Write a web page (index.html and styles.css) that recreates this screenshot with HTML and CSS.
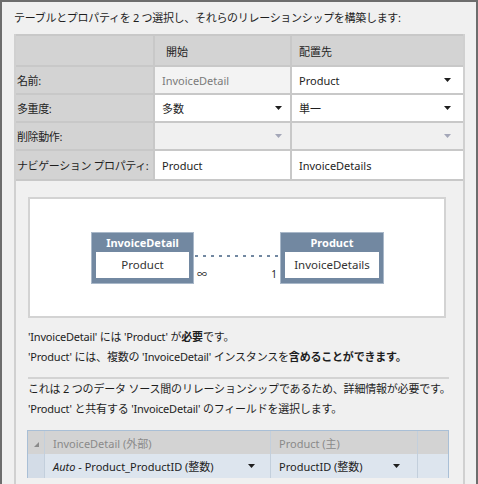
FILE: index.html
```html
<!DOCTYPE html>
<html lang="ja">
<head>
<meta charset="utf-8">
<link rel="stylesheet" href="styles.css">
</head>
<body>
<div class="window">
  <p class="intro">テーブルとプロパティを 2 つ選択し、それらのリレーションシップを構築します:</p>
  <div class="panel">
    <div class="props">
      <div class="cell head"></div>
      <div class="cell head">開始</div>
      <div class="cell head c3">配置先</div>

      <div class="cell label">名前:</div>
      <div class="cell value disabled">InvoiceDetail</div>
      <div class="cell value c3"><span>Product</span><svg class="arrow" width="7" height="4" viewBox="0 0 7 4"><path d="M0 0H7L3.5 4Z"/></svg></div>

      <div class="cell label">多重度:</div>
      <div class="cell value c2"><span>多数</span><svg class="arrow" width="7" height="4" viewBox="0 0 7 4"><path d="M0 0H7L3.5 4Z"/></svg></div>
      <div class="cell value c3"><span>単一</span><svg class="arrow" width="7" height="4" viewBox="0 0 7 4"><path d="M0 0H7L3.5 4Z"/></svg></div>

      <div class="cell label">削除動作:</div>
      <div class="cell value off c2"><span></span><svg class="arrow light" width="7" height="4" viewBox="0 0 7 4"><path d="M0 0H7L3.5 4Z"/></svg></div>
      <div class="cell value off c3"><span></span><svg class="arrow light" width="7" height="4" viewBox="0 0 7 4"><path d="M0 0H7L3.5 4Z"/></svg></div>

      <div class="cell label nav">ナビゲーション プロパティ:</div>
      <div class="cell value nav">Product</div>
      <div class="cell value nav c3">InvoiceDetails</div>
    </div>

    <div class="lower">
      <div class="diagram">
        <div class="entity">
          <div class="entity-title">InvoiceDetail</div>
          <div class="entity-body">Product</div>
        </div>
        <div class="link">
          <div class="dots"></div>
          <span class="mult left">∞</span>
          <span class="mult right">1</span>
        </div>
        <div class="entity">
          <div class="entity-title">Product</div>
          <div class="entity-body">InvoiceDetails</div>
        </div>
      </div>

      <p class="line">'InvoiceDetail' には 'Product' が<b>必要</b>です。</p>
      <p class="line">'Product' には、複数の 'InvoiceDetail' インスタンスを<b>含めることができます。</b></p>
      <div class="sep"></div>
      <p class="line">これは 2 つのデータ ソース間のリレーションシップであるため、詳細情報が必要です。</p>
      <p class="line">'Product' と共有する 'InvoiceDetail' のフィールドを選択します。</p>

      <div class="fields">
        <div class="fcell rh head"><svg width="5" height="5" viewBox="0 0 5 5"><path d="M5 0V5H0Z"/></svg></div>
        <div class="fcell head">InvoiceDetail (外部)</div>
        <div class="fcell head">Product (主)</div>
        <div class="fcell head"></div>

        <div class="fcell rh sel"></div>
        <div class="fcell sel drop d1"><span><i>Auto</i> - Product_ProductID (整数)</span><svg class="arrow" width="7" height="4" viewBox="0 0 7 4"><path d="M0 0H7L3.5 4Z"/></svg></div>
        <div class="fcell sel drop d2"><span>ProductID (整数)</span><svg class="arrow" width="7" height="4" viewBox="0 0 7 4"><path d="M0 0H7L3.5 4Z"/></svg></div>
        <div class="fcell sel"></div>
      </div>
    </div>
  </div>
</div>
</body>
</html>
```

FILE: styles.css
```css
html, body {
  margin: 0;
  padding: 0;
}
body {
  font-family: "Noto Sans", "Noto Sans CJK JP", sans-serif;
  font-size: 11px;
  color: #1e1e1e;
  background: #f0f0f0;
}
.window {
  width: 478px;
  height: 484px;
  box-sizing: border-box;
  border: 2px solid #6d6d6d;
  border-bottom: none;
  background: #f0f0f0;
  overflow: hidden;
}
.intro {
  margin: 6px 0 6px 12px;
  line-height: 20px;
  letter-spacing: -0.3px;
  white-space: nowrap;
}
.panel {
  margin-left: 12px;
  width: 451px;
  box-sizing: border-box;
  border-left: 2px solid #d0d0d0;
  border-right: 2px solid #d0d0d0;
  height: 460px;
}
.props {
  display: grid;
  grid-template-columns: 137px 135px 171px;
  grid-template-rows: 29px 26px 26px 26px 28px;
  gap: 2px;
  background: #c8c8c8;
  border-top: 2px solid #c8c8c8;
  padding-bottom: 2px;
}
.cell {
  display: flex;
  align-items: center;
  justify-content: space-between;
  padding: 0 8px 0 7px;
  white-space: nowrap;
}
.cell.head {
  background: #d3d3d3;
  padding-left: 11px;
}
.cell.head.c3 { padding-left: 7px; }
.cell.label {
  background: #d3d3d3;
  padding-left: 1px;
  letter-spacing: -0.4px;
}
.cell.value {
  background: #ffffff;
}
.cell.value.disabled {
  background: #f3f3f3;
  color: #7a7a7a;
}
.cell.value.off {
  background: #f0f0f0;
}
.cell.c2 { padding-right: 8px; }
.cell.c3 { padding-right: 12px; }
.arrow { fill: #1e1e1e; flex: none; }
.arrow.light { fill: #a4a7b8; }

.lower {
  padding: 16px 0 0 12px;
}
.diagram {
  width: 418px;
  height: 121px;
  box-sizing: border-box;
  border: 2px solid #d3d3d3;
  background: #ffffff;
  display: flex;
  justify-content: center;
  align-items: center;
  padding-left: 1px;
}
.entity {
  width: 103px;
  height: 52px;
  box-sizing: border-box;
  border: 1px solid #a9b8c9;
  background: #7288a1;
  padding: 0 4px 5px;
  display: flex;
  flex-direction: column;
}
.entity + .link + .entity { width: 104px; }
.entity-title {
  height: 19px;
  line-height: 19px;
  text-align: center;
  color: #ffffff;
  font-weight: bold;
  font-size: 11px;
}
.entity-body {
  flex: 1;
  background: #ffffff;
  display: flex;
  align-items: center;
  justify-content: center;
  color: #333;
  font-size: 11.5px;
}
.link {
  width: 86px;
  height: 52px;
  position: relative;
}
.dots {
  position: absolute;
  left: 1px;
  right: 0;
  top: 23px;
  height: 2px;
  background: repeating-linear-gradient(90deg, #7288a1 0 3px, transparent 3px 8px);
}
.mult {
  position: absolute;
  top: 36px;
  font-size: 10px;
  line-height: 12px;
}
.mult.left { left: 3px; }
.mult.right { right: 3px; }

.line {
  margin: 0;
  line-height: 20px;
  letter-spacing: -0.2px;
  white-space: nowrap;
}
.diagram + .line { margin-top: 9px; }
.sep {
  width: 421px;
  height: 2px;
  background: #d3d3d3;
  margin: 10px 0 0;
}
.fields {
  margin-top: 11px;
  margin-left: -1px;
  width: 422px;
  box-sizing: border-box;
  border: 1px solid #a9bfd6;
  border-bottom: none;
  display: grid;
  grid-template-columns: 16px 225px 146px 1fr;
  grid-template-rows: 23px 24px;
  column-gap: 1px;
  background: #c3cfdc;
}
.fcell {
  display: flex;
  align-items: center;
  padding-left: 8px;
  white-space: nowrap;
}
.fcell.head {
  background: #d3d3d3;
  color: #8a8a8a;
}
.fcell.rh { padding-left: 0; justify-content: center; }
.fcell.rh svg { fill: #8a8a8a; margin-top: 3px; }
.fcell.sel { background: #dde5ee; }
.fcell.rh.sel { background: #d3dce7; }
.fcell.drop { justify-content: space-between; }
.fcell.d1 { padding-right: 15px; }
.fcell.d2 { padding-right: 17px; }
.fcell i { font-style: italic; }
```
